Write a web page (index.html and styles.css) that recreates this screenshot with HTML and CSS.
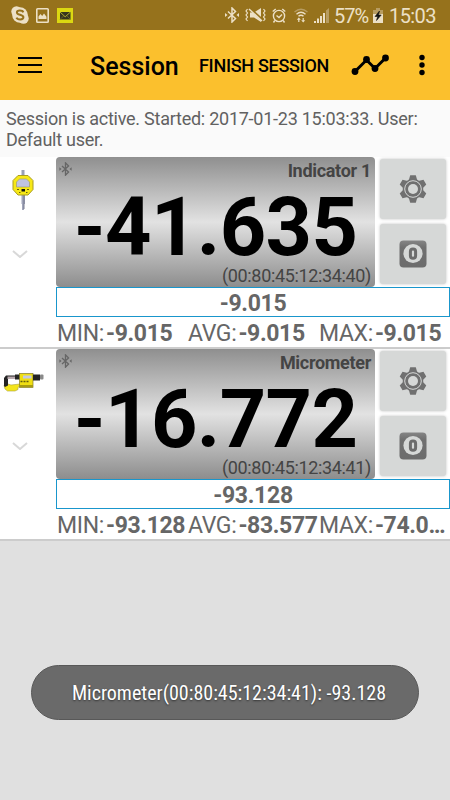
FILE: index.html
```html
<!DOCTYPE html>
<html lang="en">
<head>
  <meta charset="UTF-8" />
  <meta name="viewport" content="width=device-width, initial-scale=1.0"/>
  <title>Session</title>
  <link rel="stylesheet" href="styles.css">
</head>
<body>
  <!-- shared icons -->
  <svg class="defs" width="0" height="0">
    <defs>
      <linearGradient id="zeroFill" x1="0" y1="0" x2="0" y2="1">
        <stop offset="0" stop-color="#858585"/>
        <stop offset="0.25" stop-color="#707070"/>
        <stop offset="1" stop-color="#6c6c6c"/>
      </linearGradient>
      <symbol id="bt" viewBox="0 0 14 16">
        <path d="M3 4.500l7.500 7L7 15V1l3.500 3.500L3 11.500" fill="none" stroke="currentColor" stroke-width="1.500"/>
        <path d="M0 6l2.500 2L0 10zM14 6l-2.500 2 2.500 2z" fill="currentColor"/>
      </symbol>
      <symbol id="gear" viewBox="-14 -14 28 28">
        <g fill="#707070">
          <circle r="10.300"/>
          <path id="tooth" d="M-4.300-8.500L-2.800-13.700H2.800L4.300-8.500z"/>
          <use href="#tooth" transform="rotate(60)"/>
          <use href="#tooth" transform="rotate(120)"/>
          <use href="#tooth" transform="rotate(180)"/>
          <use href="#tooth" transform="rotate(240)"/>
          <use href="#tooth" transform="rotate(300)"/>
        </g>
        <circle r="8.300" fill="none" stroke="#d6d8d7" stroke-width="1"/>
        <circle r="5" fill="#d6d8d7"/>
      </symbol>
      <symbol id="zero" viewBox="0 0 28 28">
        <rect x="0.500" y="0.500" width="27" height="27" rx="4" fill="url(#zeroFill)"/>
        <circle cx="14" cy="13.500" r="9.600" fill="#d6d8d7"/>
        <rect x="11.400" y="8.900" width="5.200" height="9.400" rx="2.500" fill="none" stroke="#6c6c6c" stroke-width="3"/>
      </symbol>
      <symbol id="chevron" viewBox="0 0 16 8">
        <path d="M1 1l7 6 7-6" fill="none" stroke="#d8d8d8" stroke-width="2"/>
      </symbol>
    </defs>
  </svg>

  <div class="statusbar">
    <svg class="s-skype" width="18" height="18" viewBox="0 0 18 18">
      <g fill="#ece0c6"><circle cx="5.500" cy="5.500" r="5.200"/><circle cx="12.500" cy="12.500" r="5.200"/><circle cx="9" cy="9" r="7.800"/></g>
      <path d="M12.300 6.300C11.500 4.200 6 3.800 5.900 6.500c0 2.900 6.500 1.700 6.500 4.800 0 2.900-6 2.700-6.900.3" fill="none" stroke="#96721c" stroke-width="2"/>
    </svg>
    <svg class="s-image" width="13" height="15" viewBox="0 0 13 15">
      <rect x="0.800" y="0.800" width="11.400" height="13.400" rx="0.800" fill="none" stroke="#ece0c6" stroke-width="1.600"/>
      <path d="M2.500 11V8.500L4.500 6l1.700 2L8 5.500l2.500 3.300V11z" fill="#ece0c6"/>
    </svg>
    <svg class="s-mail" width="16" height="15" viewBox="0 0 16 15">
      <rect width="16" height="15" fill="#dcd811"/>
      <rect x="3" y="4" width="10.500" height="7.500" fill="#37351f"/>
      <path d="M3 4l5.200 4.800L13.500 4" fill="none" stroke="#bcb92f" stroke-width="0.900"/>
      <path d="M3 11.500l3.500-3.500M13.500 11.500L10 8" fill="none" stroke="#77742a" stroke-width="0.700"/>
    </svg>
    <svg class="s-bt" width="14" height="16"><use href="#bt"/></svg>
    <svg class="s-mute" width="23" height="16" viewBox="0 0 23 16">
      <path d="M6 5.500h4L17 1v14l-7-4.500H6z" fill="#ece0c6"/>
      <path d="M6 1.500l13 12" stroke="#96721c" stroke-width="2.500"/>
      <path d="M5 2l13 12" stroke="#ece0c6" stroke-width="1.500"/>
      <path d="M3.500 2L2 4l1.500 2L2 8l1.500 2L2 12l1.500 2M19.500 2L21 4l-1.500 2L21 8l-1.500 2 1.500 2-1.500 2" fill="none" stroke="#ece0c6" stroke-width="1.200"/>
    </svg>
    <svg class="s-alarm" width="14" height="15" viewBox="0 0 14 15">
      <circle cx="7" cy="8" r="5.600" fill="none" stroke="#ece0c6" stroke-width="1.400"/>
      <path d="M0.700 3.500l3-2.500M13.300 3.500l-3-2.500M2.800 12.500L1.500 14.500M11.200 12.500l1.300 2M4.500 7.500L7 9.500l3-3" fill="none" stroke="#ece0c6" stroke-width="1.400"/>
    </svg>
    <svg class="s-wifi" width="14" height="15" viewBox="0 0 14 15">
      <path d="M0.500 4Q7-1.500 13.500 4" fill="none" stroke="#b79c61" stroke-width="1.300"/>
      <path d="M2.500 6.200Q7 2.300 11.500 6.200M4.500 8.300Q7 6 9.500 8.300" fill="none" stroke="#ece0c6" stroke-width="1.400"/>
      <path d="M4.800 9.500l2 2.300H5.400V14H4.200v-2.200H2.800zM9.200 14.500l-2-2.300h1.400V10h1.200v2.200h1.400z" fill="#ece0c6"/>
    </svg>
    <svg class="s-signal" width="16" height="15" viewBox="0 0 16 15">
      <path d="M0 15v-2h2v2zM3 15v-4.500h2V15zM6 15V8h2v7zM9 15V5h2v10z" fill="#ece0c6"/>
      <path d="M12 15V2.500l3-2.500v15z" fill="#b79c61"/>
    </svg>
    <span class="battery-text">57%</span>
    <svg class="s-battery" width="10" height="15" viewBox="0 0 10 15">
      <path d="M3 0h4v2h3v4H0V2h3z" fill="#b79c61"/>
      <path d="M0 6h10v9H0z" fill="#ece0c6"/>
      <path d="M6.500 3L2 8.500h2.700L3.500 12.500 8.200 7H5.500z" fill="#111" stroke="#111" stroke-width="0.600"/>
    </svg>
    <span class="clock">15:03</span>
  </div>

  <header>
    <svg class="menu-icon" width="24" height="16" viewBox="0 0 24 16">
      <path d="M0 1h24M0 8h24M0 15h24" stroke="#000" stroke-width="2"/>
    </svg>
    <h1>Session</h1>
    <span class="finish">FINISH SESSION</span>
    <svg class="chart-icon" width="38" height="22" viewBox="0 0 38 22">
      <path d="M4 17.500L15.500 6 24 14.500 34.500 4" fill="none" stroke="#000" stroke-width="3"/>
      <circle cx="4" cy="17.500" r="3.400"/><circle cx="15.500" cy="5.500" r="3.400"/>
      <circle cx="24" cy="14.500" r="3.400"/><circle cx="34.500" cy="4" r="3.400"/>
    </svg>
    <svg class="more-icon" width="6" height="22" viewBox="0 0 6 22">
      <circle cx="3" cy="3.500" r="2.700"/><circle cx="3" cy="11" r="2.700"/><circle cx="3" cy="18.500" r="2.700"/>
    </svg>
  </header>

  <p class="session-info">Session is active. Started: 2017-01-23 15:03:33. User:<br>Default user.</p>

  <main>
    <section class="device">
      <div class="side">
        <svg class="device-icon" width="46" height="44" viewBox="0 0 46 44">
          <rect x="21.500" y="1" width="3" height="10" fill="#9aa0b4"/>
          <path d="M21.500 25h3.500v10h-1v6h-2v-6h-.5z" fill="#a2a6bb"/>
          <path d="M24 26v14" stroke="#6e7186" stroke-width="0.900"/>
          <path d="M18 6.500h10l5 5v9l-5 5.500H18l-5-5.500v-9z" fill="#f7e816" stroke="#aa9d21" stroke-width="1"/>
          <path d="M16.500 18v-5l3-3h7l3 3v5z" fill="#bfc3e2" stroke="#98966f" stroke-width="0.600"/>
          <rect x="21.500" y="20" width="3.500" height="2.500" fill="#111"/>
          <path d="M17 20.500h2M27 20.500h2M19 23.500h1.500M26 23.500h1.500" stroke="#66600e"/>
        </svg>
        <svg class="chevron" width="16" height="8"><use href="#chevron"/></svg>
      </div>
      <div class="content">
        <div class="top">
          <div class="display">
            <div class="name"><svg width="13" height="14"><use href="#bt"/></svg><b>Indicator 1</b></div>
            <div class="reading">-41.635</div>
            <div class="address">(00:80:45:12:34:40)</div>
          </div>
          <div class="actions">
            <button><svg width="28" height="28"><use href="#gear"/></svg></button>
            <button><svg width="28" height="28"><use href="#zero"/></svg></button>
          </div>
        </div>
        <div class="last-value">-9.015</div>
        <div class="stats">
          <div>MIN:<b>-9.015</b></div>
          <div>AVG:<b>-9.015</b></div>
          <div>MAX:<b>-9.015</b></div>
        </div>
      </div>
    </section>

    <section class="device">
      <div class="side">
        <svg class="device-icon" width="46" height="44" viewBox="0 0 46 44">
          <path d="M4 24l4-1 3 1 9-1v2l-2 1.500v2L15 30H7.500L5 28z" fill="#f4e51c" stroke="#a9a13a" stroke-width="0.600"/>
          <path d="M4 17l2-2.500h11v3H8v7l-3 1.500-1-1z" fill="#242424"/>
          <rect x="7.500" y="15.500" width="8.500" height="2.500" fill="#b9a9ae"/>
          <rect x="15" y="13.500" width="5" height="5" fill="#242424"/>
          <rect x="19.500" y="12.500" width="13.500" height="14" fill="#f0df12" stroke="#817a28" stroke-width="0.700"/>
          <rect x="23" y="14.500" width="8.500" height="3" fill="#c4c9e2"/>
          <path d="M20.500 20.500h8" stroke="#615a10" stroke-width="1.500" stroke-dasharray="2 1"/>
          <path d="M20 25h13" stroke="#a89b12" stroke-width="2"/>
          <rect x="33" y="13.500" width="7" height="6" fill="#242424"/>
          <rect x="40" y="13.500" width="3.500" height="5" rx="1" fill="#8a8a8a"/>
        </svg>
        <svg class="chevron" width="16" height="8"><use href="#chevron"/></svg>
      </div>
      <div class="content">
        <div class="top">
          <div class="display">
            <div class="name"><svg width="13" height="14"><use href="#bt"/></svg><b>Micrometer</b></div>
            <div class="reading">-16.772</div>
            <div class="address">(00:80:45:12:34:41)</div>
          </div>
          <div class="actions">
            <button><svg width="28" height="28"><use href="#gear"/></svg></button>
            <button><svg width="28" height="28"><use href="#zero"/></svg></button>
          </div>
        </div>
        <div class="last-value">-93.128</div>
        <div class="stats">
          <div>MIN:<b>-93.128</b></div>
          <div>AVG:<b>-83.577</b></div>
          <div>MAX:<b>-74.0…</b></div>
        </div>
      </div>
    </section>
  </main>

  <div class="toast"><span>Micrometer(00:80:45:12:34:41): -93.128</span></div>
</body>
</html>
```
FILE: styles.css
```css
* {
  box-sizing: border-box;
}
body {
  margin: 0;
  height: 800px;
  overflow: hidden;
  background: #e0e0e0;
  font-family: Roboto, "Liberation Sans", sans-serif;
  color: #666;
}
svg {
  display: block;
  flex: none;
}
.defs {
  position: absolute;
}

/* status bar */
.statusbar {
  display: flex;
  align-items: center;
  height: 30px;
  padding-left: 11px;
  background: #96721c;
  color: #ece0c6;
  font-size: 20px;
  white-space: nowrap;
}
.s-image {
  margin-left: 7px;
}
.s-mail {
  margin-left: 8px;
}
.s-bt {
  margin-left: 152px;
}
.s-mute {
  margin-left: 5px;
}
.s-alarm {
  margin-left: 5px;
}
.s-wifi {
  margin-left: 8px;
}
.s-signal {
  margin-left: 6px;
}
.battery-text {
  width: 38px;
  margin-top: 1px;
  margin-left: 4px;
  letter-spacing: -1px;
}
.s-battery {
  margin-left: 1px;
}
.clock {
  margin-top: 1px;
  margin-left: 6px;
  letter-spacing: -0.6px;
}

/* app bar */
header {
  display: flex;
  align-items: center;
  height: 70px;
  padding-left: 18px;
  background: #fbc02d;
  color: #000;
  white-space: nowrap;
}
.menu-icon {
  margin-top: -1px;
}
h1 {
  width: 109px;
  margin: 2px 0 0 48px;
  font-size: 25px;
  font-weight: 500;
}
.finish {
  width: 152px;
  margin-top: 1px;
  font-size: 18px;
  font-weight: 500;
  letter-spacing: -0.3px;
}
.more-icon {
  margin-left: 30px;
}

.session-info {
  height: 57px;
  margin: 0;
  padding: 8px 6px 0;
  background: #fafafa;
  color: #616161;
  font-size: 18px;
  line-height: 21px;
  letter-spacing: -0.25px;
  white-space: nowrap;
}

/* device rows */
.device {
  display: flex;
  height: 192px;
  background: #fff;
  border-bottom: 2px solid #ccc;
}
.side {
  width: 56px;
  flex: none;
}
.device-icon {
  margin-top: 12px;
}
.chevron {
  margin: 37px 0 0 12px;
}
.content {
  flex: 1;
  min-width: 0;
}
.top {
  display: flex;
  height: 130px;
}
.display {
  width: 319px;
  border-radius: 4px;
  background: linear-gradient(#8f8f8f, #e2e2e2 50%, #8d8d8d);
  color: #444;
}
.name {
  display: flex;
  justify-content: space-between;
  height: 29px;
  padding: 5px 4px 0 3px;
  font-size: 18px;
  line-height: 18px;
  letter-spacing: -0.3px;
}
.name svg {
  color: #666;
}
.reading {
  height: 80px;
  color: #000;
  font-size: 81px;
  font-weight: bold;
  line-height: 83px;
  letter-spacing: -0.6px;
  text-align: center;
}
.address {
  padding-right: 4px;
  font-size: 18px;
  line-height: 20px;
  letter-spacing: -0.35px;
  text-align: right;
}
.actions {
  display: flex;
  flex-direction: column;
  gap: 5px;
  padding: 2px 0 0 5px;
}
button {
  display: flex;
  align-items: center;
  justify-content: center;
  width: 66px;
  height: 60px;
  padding: 0;
  background: #d6d8d7;
  border: none;
  border-radius: 3px;
  box-shadow: 0 0 3px rgba(0, 0, 0, 0.25);
}
.last-value {
  height: 30px;
  border: 1px solid #1996cc;
  font-size: 23px;
  font-weight: bold;
  line-height: 31px;
  letter-spacing: -0.3px;
  text-align: center;
}
.stats {
  display: grid;
  grid-template-columns: 131px 131px 131px;
  height: 30px;
  padding-left: 1px;
  font-size: 23px;
  line-height: 33px;
  letter-spacing: -0.35px;
  white-space: nowrap;
}
.stats b {
  margin-left: 2px;
}

.toast {
  position: absolute;
  top: 665px;
  left: 31px;
  width: 388px;
  height: 55px;
  padding-left: 40px;
  border: 1px solid #585858;
  border-radius: 28px;
  background: #6a6a6a;
  color: #fff;
  font-size: 20px;
  line-height: 54px;
  white-space: nowrap;
}
.toast span {
  font-family: "Roboto Condensed", Roboto, sans-serif;
  font-stretch: condensed;
  text-shadow: 0 1px 2px #333;
}
```
